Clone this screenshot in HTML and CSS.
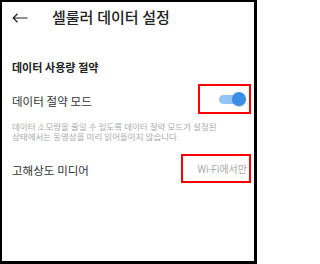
FILE: index.html
```html
<!DOCTYPE html>
<html lang="ko">
<head>
<meta charset="utf-8">
<link rel="stylesheet" href="styles.css">
</head>
<body>
<div class="frame">
  <div class="header">
    <svg class="back" width="16" height="10" viewBox="0 0 16 10">
      <path d="M15.5 5H1.2M5.5 0.8L1.2 5L5.5 9.2" fill="none" stroke="#222" stroke-width="1.2"/>
    </svg>
    <div class="title">셀룰러 데이터 설정</div>
  </div>
  <div class="section-title">데이터 사용량 절약</div>
  <div class="row">
    <div class="label">데이터 절약 모드</div>
    <div class="mark mark-toggle">
      <div class="toggle"><div class="track"></div><div class="knob"></div></div>
    </div>
  </div>
  <div class="desc">데이터 소모량을 줄일 수 있도록 데이터 절약 모드가 설정된<br>상태에서는 동영상을 미리 읽어들이지 않습니다.</div>
  <div class="row row-media">
    <div class="label">고해상도 미디어</div>
    <div class="mark mark-value"><span class="value">Wi-Fi에서만</span></div>
  </div>
</div>
</body>
</html>
```
FILE: styles.css
```css
html, body { margin: 0; padding: 0; background: #fff; }
body { font-family: Roboto, "Noto Sans CJK KR", sans-serif; }
.frame {
  width: 257px; height: 264px; box-sizing: border-box;
  border-style: solid; border-color: #000;
  border-width: 2px 3px 3px 2px;
  padding: 0 3px 0 10px;
}
.header { display: flex; align-items: center; height: 32px; }
.back { display: block; }
.title { margin-left: 24px; font-size: 15px; font-weight: 500; color: #222; line-height: 20px; }
.section-title { margin-top: 27px; font-size: 11px; font-weight: 700; color: #222; line-height: 16px; }
.row { display: flex; align-items: center; justify-content: space-between; margin-top: 7px; }
.label { font-size: 11.5px; color: #333; line-height: 16px; padding-top: 5px; }
.mark { box-sizing: border-box; border: 2px solid #f00; display: flex; align-items: center; justify-content: flex-end; }
.mark-toggle { width: 53px; height: 30px; padding-right: 3px; }
.toggle { position: relative; width: 27px; height: 14px; }
.track { position: absolute; left: 0; right: 1px; top: 3px; height: 9px; border-radius: 5px; background: #90c5f6; }
.knob { position: absolute; right: 0; top: 0; width: 14px; height: 14px; border-radius: 50%; background: #3a8ee8; box-shadow: 0 1px 1px rgba(0,0,0,0.2); }
.desc { margin-top: 8px; font-size: 8.5px; line-height: 10px; color: #aaa; }
.row-media { margin-top: 12px; }
.mark-value { width: 70px; height: 29px; padding-right: 2px; }
.value { font-size: 10px; color: #aaa; line-height: 12px; padding-top: 2px; }
```
